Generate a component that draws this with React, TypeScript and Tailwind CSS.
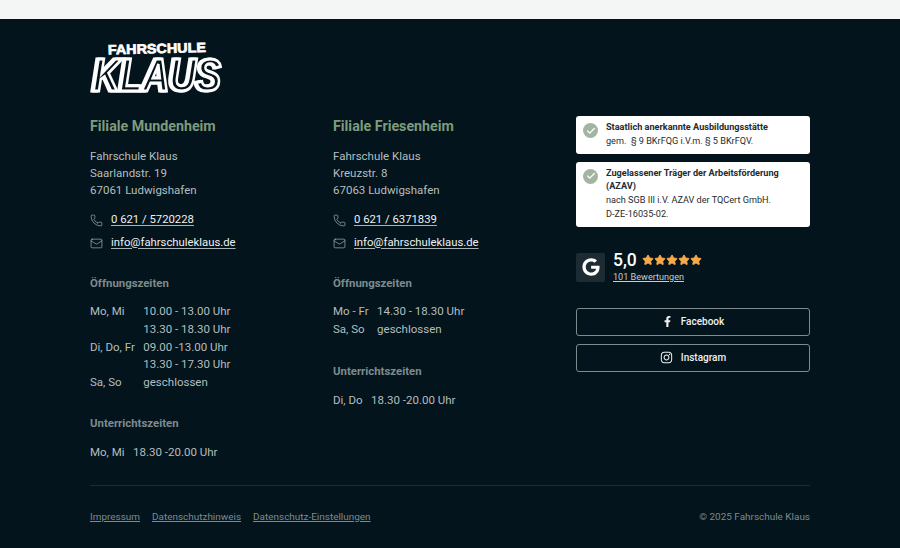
import React from "react";
import { Check, Mail, Phone, Star } from "lucide-react";
import { FaFacebookF, FaGoogle, FaInstagram } from "react-icons/fa";

const Logo = () => (
  <svg width="140" height="64" viewBox="0 0 140 64" className="block">
    <text x="18" y="16.5" transform="rotate(-1.5 18 16.5)" fontFamily="'Liberation Sans', sans-serif" fontWeight="700" fontSize="13.5" textLength="98" lengthAdjust="spacingAndGlyphs" fill="#fff" stroke="#fff" strokeWidth="0.7">FAHRSCHULE</text>
    {/* white drop shadow gives the heavier left edge of the letters */}
    <text x="3" y="52.5" className="drop-shadow-[-1.5px_0_0_#fff]" fontFamily="'Liberation Sans', sans-serif" fontWeight="700" fontStyle="italic" fontSize="46" textLength="128" lengthAdjust="spacingAndGlyphs" fill="#03141c" stroke="#fff" strokeWidth="3">KLAUS</text>
  </svg>
);

const Hours = ({ rows }: { rows: [string, string][] }) => (
  <div className="grid grid-cols-[auto_1fr] gap-x-[8.5px] leading-[17.75px]">
    {rows.map(([day, time], i) => (
      <React.Fragment key={i}>
        <span>{day}</span>
        <span>{time}</span>
      </React.Fragment>
    ))}
  </div>
);

const Branch = ({ name, street, city, phone, children }: { name: string; street: string; city: string; phone: string; children: React.ReactNode }) => (
  <div className="w-[243px] text-[11.5px] text-[#b4bebf]">
    <h3 className="text-[14.25px] leading-5 font-bold text-[#7e9b7c]">{name}</h3>
    <p className="mt-[12px] leading-[17px]">Fahrschule Klaus<br />{street}<br />{city}</p>
    <div className="mt-[12px] flex items-center gap-2 h-[18px] text-[11.3px] text-[#eef1f1]">
      <Phone size={13} strokeWidth={1.1} className="text-[#c5cdce]" />
      <a className="underline decoration-[#a9b4b6] underline-offset-2">{phone}</a>
    </div>
    <div className="mt-[5px] flex items-center gap-2 h-[18px] text-[11.3px] text-[#eef1f1]">
      <Mail size={13} strokeWidth={1.1} className="text-[#c5cdce]" />
      <a className="underline decoration-[#a9b4b6] underline-offset-2">info@fahrschuleklaus.de</a>
    </div>
    {children}
  </div>
);

const SectionTitle = ({ children, className }: { children: React.ReactNode; className: string }) => (
  <h4 className={"text-[11.4px] leading-4 font-bold text-[#7d8b8e] " + className}>{children}</h4>
);

const Badge = ({ children }: { children: React.ReactNode }) => (
  <div className="bg-white rounded-[3px] flex gap-2 pl-[7px] pr-2 py-[5px] text-[9.15px] leading-[13.75px] text-[#252b2e]">
    <div className="mt-[2px] w-[15px] h-[15px] rounded-full bg-[#a3b5a2] shrink-0 flex items-center justify-center">
      <Check size={10} strokeWidth={3} className="text-white" />
    </div>
    <div>{children}</div>
  </div>
);

const SocialButton = ({ icon, label }: { icon: React.ReactNode; label: string }) => (
  <a className="h-7 border border-[#7e8c8f] rounded-[3px] flex items-center justify-center gap-2 text-[10px] font-medium text-[#eef1f1]">
    {icon}
    {label}
  </a>
);

export default function App() {
  return (
    <div className="w-[900px] h-[548px] overflow-hidden bg-[#f4f5f5] pt-[19px] font-['Roboto',sans-serif]">
      <footer className="h-[529px] bg-[#03141c] px-[90px] pt-[19px]">
        <Logo />
        <div className="mt-[14px] flex h-[360px]">
          <Branch name="Filiale Mundenheim" street="Saarlandstr. 19" city="67061 Ludwigshafen" phone="0 621 / 5720228">
            <SectionTitle className="mt-[23px] mb-[12px]">Öffnungszeiten</SectionTitle>
            <Hours rows={[["Mo, Mi", "10.00 - 13.00 Uhr"], ["", "13.30 - 18.30 Uhr"], ["Di, Do, Fr", "09.00 -13.00 Uhr"], ["", "13.30 - 17.30 Uhr"], ["Sa, So", "geschlossen"]]} />
            <SectionTitle className="mt-[23px] mb-[13px]">Unterrichtszeiten</SectionTitle>
            <Hours rows={[["Mo, Mi", "18.30 -20.00 Uhr"]]} />
          </Branch>
          <Branch name="Filiale Friesenheim" street="Kreuzstr. 8" city="67063 Ludwigshafen" phone="0 621 / 6371839">
            <SectionTitle className="mt-[23px] mb-[12px]">Öffnungszeiten</SectionTitle>
            <Hours rows={[["Mo - Fr", "14.30 - 18.30 Uhr"], ["Sa, So", "geschlossen"]]} />
            <SectionTitle className="mt-[24px] mb-[13px]">Unterrichtszeiten</SectionTitle>
            <Hours rows={[["Di, Do", "18.30 -20.00 Uhr"]]} />
          </Branch>
          <div className="w-[234px] flex flex-col">
            <div className="flex flex-col gap-2">
              <Badge>
                <b className="font-bold">Staatlich anerkannte Ausbildungsstätte</b><br />
                gem.&nbsp; § 9 BKrFQG i.V.m. § 5 BKrFQV.
              </Badge>
              <Badge>
                <b className="font-bold">Zugelassener Träger der Arbeitsförderung (AZAV)</b><br />
                nach SGB III i.V. AZAV der TQCert GmbH.<br />
                D-ZE-16035-02.
              </Badge>
            </div>
            <div className="mt-[26px] flex gap-2">
              <div className="w-[29px] h-[29px] rounded-[2px] bg-[#1d2c33] flex items-center justify-center">
                <FaGoogle size={18} className="text-white" />
              </div>
              <div className="-mt-[3px]">
                <div className="flex items-center gap-[5px]">
                  <span className="text-[17.5px] leading-[20px] font-medium text-white">5,0</span>
                  <div className="flex">
                    {[0, 1, 2, 3, 4].map(i => <Star key={i} size={12} fill="#f7a94b" stroke="#f7a94b" />)}
                  </div>
                </div>
                <a className="block text-[9.1px] leading-[13px] mt-px underline text-[#c5cdce]">101 Bewertungen</a>
              </div>
            </div>
            <div className="mt-[24px] flex flex-col gap-2">
              <SocialButton icon={<FaFacebookF size={11} />} label="Facebook" />
              <SocialButton icon={<FaInstagram size={13} />} label="Instagram" />
            </div>
          </div>
        </div>
        <div className="mt-[9px] border-t border-[#1e2d33] pt-[23px] flex justify-between text-[9.95px] leading-4 text-[#7d8b8e]">
          <div className="flex gap-3">
            <a className="underline">Impressum</a>
            <a className="underline">Datenschutzhinweis</a>
            <a className="underline">Datenschutz-Einstellungen</a>
          </div>
          <span>© 2025 Fahrschule Klaus</span>
        </div>
      </footer>
    </div>
  );
}
